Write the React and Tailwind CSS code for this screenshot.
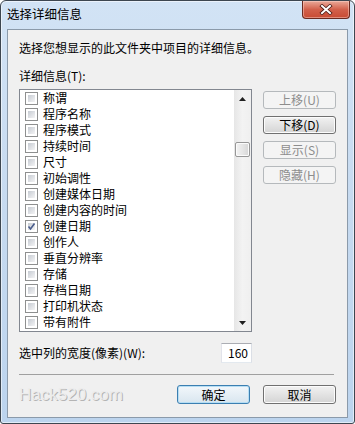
import React from 'react';

const items = [
  '称谓', '程序名称', '程序模式', '持续时间', '尺寸', '初始调性', '创建媒体日期',
  '创建内容的时间', '创建日期', '创作人', '垂直分辨率', '存储', '存档日期', '打印机状态', '带有附件',
];

const Checkbox = ({ checked }) => (
  <div className="w-[13px] h-[13px] border border-[#8e8f8f] bg-white p-[2px] shrink-0">
    <div className="relative w-full h-full bg-gradient-to-br from-[#c6cbd2] to-[#f4f4f5]">
      {checked && (
        <svg className="absolute -left-[2px] -top-[2px]" width="11" height="11" viewBox="0 0 11 11">
          <path d="M2.5 5.5 L4.5 8 L8.5 2.5" fill="none" stroke="#4a5d8c" strokeWidth="1.6" />
        </svg>
      )}
    </div>
  </div>
);

const Btn = ({ children, disabled, primary, className = '' }) => {
  const base = 'flex items-center justify-center rounded-[3px] border text-[12px] leading-[16px]';
  if (disabled) {
    return <div className={`${base} border-[#b5b9bc] bg-[#f4f4f4] text-[#8d8d8d] ${className}`}>{children}</div>;
  }
  if (primary) {
    return (
      <div className={`${base} border-[#3c7fb1] bg-gradient-to-b from-[#f2f7fb] to-[#d9e6ef] text-black shadow-[inset_0_0_0_1px_#b6def4] ${className}`}>
        {children}
      </div>
    );
  }
  return (
    <div className={`${base} border-[#707070] bg-gradient-to-b from-[#f2f2f2] to-[#d4d4d4] text-black shadow-[inset_0_0_0_1px_#fcfcfc] ${className}`}>
      {children}
    </div>
  );
};

export default function App() {
  return (
    <div className="w-[355px] h-[424px] flex flex-col rounded-t-[6px] rounded-b-[3px] border border-[#3d4650] bg-gradient-to-b from-[#d2e3f5] via-[#c6daf0] to-[#bcd4ee] shadow-[inset_0_0_0_1px_rgba(255,255,255,0.55)] font-['Noto_Sans_CJK_SC',sans-serif] text-black overflow-hidden">
      {/* Title bar */}
      <div className="h-[28px] flex items-start shrink-0">
        <div className="pl-[6px] pt-[5px] text-[12.5px] leading-[16px]">选择详细信息</div>
        <div className="ml-auto mr-[4px] w-[48px] h-[18px] rounded-b-[4px] border border-t-0 border-[#6b2a20] bg-gradient-to-b from-[#e9a999] via-[#d2604b] to-[#c84a33] shadow-[inset_0_0_0_1px_rgba(255,220,210,0.45)] flex items-center justify-center">
          <svg width="14" height="11" viewBox="0 0 14 11">
            <path d="M3 2 L11 9 M11 2 L3 9" stroke="#4a1a14" strokeWidth="3.6" strokeLinecap="square" />
            <path d="M3 2 L11 9 M11 2 L3 9" stroke="#ffffff" strokeWidth="2" strokeLinecap="square" />
          </svg>
        </div>
      </div>

      {/* Client area */}
      <div className="mx-[6px] h-[389px] border border-[#8b9aaa] bg-[#f0f0f0] flex flex-col px-[11px] pt-[10px] pb-[13px] text-[12px] leading-[16px]">
        <div>选择您想显示的此文件夹中项目的详细信息。</div>
        <div className="mt-[12px]">详细信息(T):</div>

        <div className="mt-[5px] flex gap-[11px]">
          {/* List box */}
          <div className="w-[233px] h-[243px] border border-[#828790] bg-white flex">
            <div className="flex-1 flex flex-col">
              {items.map((it) => (
                <div key={it} className="h-[16px] flex items-center pl-[5px] gap-[5px]">
                  <Checkbox checked={it === '创建日期'} />
                  <span className="leading-[16px]">{it}</span>
                </div>
              ))}
            </div>
            {/* Scrollbar */}
            <div className="w-[17px] bg-gradient-to-r from-[#e6e6e6] via-[#f3f3f3] to-[#efefef] flex flex-col items-center">
              <div className="h-[17px] flex items-center justify-center">
                <svg width="7" height="4" viewBox="0 0 7 4"><path d="M0 4 L3.5 0 L7 4 Z" fill="#202020" /></svg>
              </div>
              <div className="mt-[35px] w-[15px] h-[15px] rounded-[2px] border border-[#979797] bg-gradient-to-r from-[#f3f3f3] via-[#e6e6e6] to-[#d6d6d6] shadow-[inset_0_0_0_1px_#fbfbfb]" />
              <div className="mt-auto h-[17px] flex items-center justify-center">
                <svg width="7" height="4" viewBox="0 0 7 4"><path d="M0 0 L7 0 L3.5 4 Z" fill="#202020" /></svg>
              </div>
            </div>
          </div>

          {/* Side buttons */}
          <div className="pt-[2px] flex flex-col gap-[7px]">
            <Btn disabled className="w-[73px] h-[18px]">上移(U)</Btn>
            <Btn className="w-[73px] h-[18px]">下移(D)</Btn>
            <Btn disabled className="w-[73px] h-[18px]">显示(S)</Btn>
            <Btn disabled className="w-[73px] h-[18px]">隐藏(H)</Btn>
          </div>
        </div>

        {/* Width row */}
        <div className="mt-[11px] w-[233px] h-[20px] flex items-center justify-between">
          <span>选中列的宽度(像素)(W):</span>
          <div className="w-[31px] h-[20px] border border-[#abadb3] border-l-[#e2e3ea] border-r-[#dbdfe6] border-b-[#e3e9ef] bg-white flex items-center justify-end pr-[3px]">
            160
          </div>
        </div>

        <div className="mt-[11px] w-[315px] h-px bg-[#a0a0a0]" />

        {/* Bottom buttons */}
        <div className="mt-[10px] flex items-center">
          <span className="font-['Liberation_Sans',sans-serif] text-[17px] leading-[19px] text-[#ececec] [text-shadow:1px_1px_0_#b4b4b4]">
            Hack520.com
          </span>
          <div className="ml-auto flex gap-[13px]">
            <Btn primary className="w-[73px] h-[19px]">确定</Btn>
            <Btn className="w-[73px] h-[19px]">取消</Btn>
          </div>
        </div>
      </div>
    </div>
  );
}
